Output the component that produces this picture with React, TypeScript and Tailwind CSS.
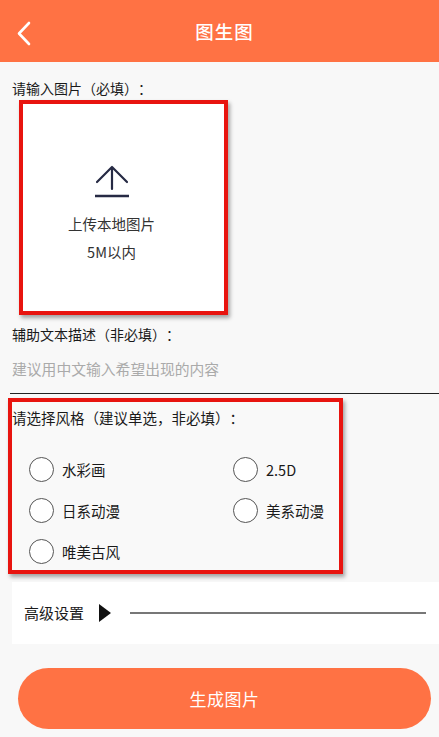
import React from "react";

const font = { fontFamily: '"Noto Sans CJK SC", "Noto Sans", sans-serif' };

function Radio({ label }: { label: string }) {
  return (
    <div className="flex items-center gap-[8px]">
      <div className="w-[25px] h-[25px] rounded-full border border-[#555] bg-white" />
      <span className="text-[14.5px] leading-[20px] text-[#1a1a1a]">{label}</span>
    </div>
  );
}

export default function App() {
  return (
    <div className="w-[439px] h-[737px] bg-[#f8f8f8] overflow-hidden flex flex-col [text-spacing-trim:space-all]" style={font}>
      <div className="h-[62px] bg-[#ff7244] relative flex items-center justify-center pl-[10px] shrink-0">
        <svg className="absolute left-[15px] top-[21px]" width="18" height="25" viewBox="0 0 18 25">
          <path d="M14 2 L4 12.5 L14 23" fill="none" stroke="white" strokeWidth="2.6" strokeLinecap="round" strokeLinejoin="round" />
        </svg>
        <span className="text-white text-[18.5px] font-medium leading-none tracking-[1px]">图生图</span>
      </div>

      <div className="flex flex-col">
        <div className="pl-[12px] pt-[16px] text-[14px] leading-[20px] text-[#1a1a1a]">请输入图片（必填）：</div>

        <div className="ml-[19px] mt-[2px] w-[209px] h-[215px] border-[4px] border-[#e8140f] bg-white shadow-[2px_3px_4px_rgba(0,0,0,0.35)] flex flex-col items-center pt-[60px] pr-[24px]">
          <svg width="40" height="36" viewBox="0 0 40 36">
            <path d="M20 3 V25 M5 18 L20 3 L35 18" fill="none" stroke="#262a44" strokeWidth="2.2" strokeLinecap="round" strokeLinejoin="round" />
            <path d="M3 32 H37" stroke="#262a44" strokeWidth="2.6" />
          </svg>
          <div className="mt-[14px] text-[14.5px] leading-[20px] text-[#333]">上传本地图片</div>
          <div className="mt-[8px] text-[14.5px] leading-[20px] text-[#333]">5M以内</div>
        </div>

        <div className="pl-[12px] mt-[9px] text-[14px] leading-[20px] text-[#1a1a1a]">辅助文本描述（非必填）：</div>
        <div className="pl-[12px] mt-[15px] text-[14.8px] leading-[20px] text-[#aaa]">建议用中文输入希望出现的内容</div>
        <div className="ml-[10px] mt-[14px] h-[1px] bg-[#222]" />

        <div className="ml-[8px] mt-[4px] w-[335px] h-[176px] border-[4px] border-[#e8140f] bg-[#f9f9f9] shadow-[2px_3px_4px_rgba(0,0,0,0.35)] flex flex-col">
          <div className="pl-[0px] pt-[6px] text-[14.5px] leading-[20px] text-[#1a1a1a]">请选择风格（建议单选，非必填）：</div>
          <div className="grid grid-cols-[204px_1fr] gap-y-[16px] pl-[17px] mt-[29px]">
            <Radio label="水彩画" />
            <Radio label="2.5D" />
            <Radio label="日系动漫" />
            <Radio label="美系动漫" />
            <Radio label="唯美古风" />
          </div>
        </div>

        <div className="ml-[12px] mt-[8px] h-[62px] bg-white flex items-center pl-[12px] pr-[13px]">
          <span className="text-[15px] leading-[20px] text-[#1a1a1a]">高级设置</span>
          <svg className="ml-[14px]" width="14" height="20" viewBox="0 0 14 20">
            <path d="M1 1 L13 10 L1 19 Z" fill="#111" />
          </svg>
          <div className="ml-[18px] flex-1 h-[1.5px] bg-[#777]" />
        </div>

        <div className="ml-[18px] mr-[8px] mt-[24px] h-[61px] rounded-full bg-[#ff7244] flex items-center justify-center">
          <span className="text-white text-[17px] leading-none tracking-[0.5px]">生成图片</span>
        </div>
      </div>
    </div>
  );
}
